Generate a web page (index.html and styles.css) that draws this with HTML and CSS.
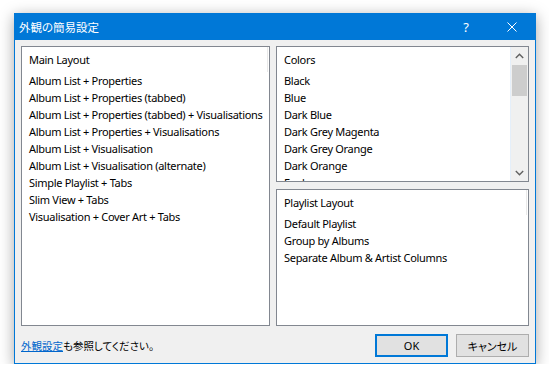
FILE: index.html
```html
<!DOCTYPE html>
<html lang="ja">
<head>
  <meta charset="UTF-8">
  <meta name="viewport" content="width=device-width, initial-scale=1.0">
  <title>外観の簡易設定</title>
  <link rel="stylesheet" href="styles.css">
</head>
<body>
  <div class="dialog">
    <div class="titlebar">
      <span class="title">外観の簡易設定</span>
      <div class="caption">
        <span class="cap-btn help">?</span>
        <span class="cap-btn close">
          <svg width="10" height="10" viewBox="0 0 10 10">
            <path d="M0.5 0.5 L9.5 9.5 M9.5 0.5 L0.5 9.5" stroke="#fff" stroke-width="1" fill="none"/>
          </svg>
        </span>
      </div>
    </div>

    <div class="content">
      <div class="panes">
        <div class="list main-list">
          <div class="list-head">Main Layout</div>
          <ul class="items">
            <li>Album List + Properties</li>
            <li>Album List + Properties (tabbed)</li>
            <li>Album List + Properties (tabbed) + Visualisations</li>
            <li>Album List + Properties + Visualisations</li>
            <li>Album List + Visualisation</li>
            <li>Album List + Visualisation (alternate)</li>
            <li>Simple Playlist + Tabs</li>
            <li>Slim View + Tabs</li>
            <li>Visualisation + Cover Art + Tabs</li>
          </ul>
        </div>

        <div class="side">
          <div class="list colors-list">
            <div class="list-body">
              <div class="list-head">Colors</div>
              <ul class="items">
                <li>Black</li>
                <li>Blue</li>
                <li>Dark Blue</li>
                <li>Dark Grey Magenta</li>
                <li>Dark Grey Orange</li>
                <li>Dark Orange</li>
                <li>Foobar</li>
              </ul>
            </div>
            <div class="scrollbar">
              <span class="arrow">
                <svg width="9" height="6" viewBox="0 0 9 6"><path d="M0.8 5 L4.5 1.3 L8.2 5" stroke="#606060" stroke-width="1.4" fill="none"/></svg>
              </span>
              <div class="track"><div class="thumb"></div></div>
              <span class="arrow">
                <svg width="9" height="6" viewBox="0 0 9 6"><path d="M0.8 1 L4.5 4.7 L8.2 1" stroke="#606060" stroke-width="1.4" fill="none"/></svg>
              </span>
            </div>
          </div>

          <div class="list playlist-list">
            <div class="list-head">Playlist Layout</div>
            <ul class="items">
              <li>Default Playlist</li>
              <li>Group by Albums</li>
              <li>Separate Album &amp; Artist Columns</li>
            </ul>
          </div>
        </div>
      </div>

      <div class="footer">
        <p class="note"><a href="#">外観設定</a>も参照してください。</p>
        <div class="buttons">
          <button class="btn default">OK</button>
          <button class="btn">キャンセル</button>
        </div>
      </div>
    </div>
  </div>
</body>
</html>
```

FILE: styles.css
```css
body {
  margin: 0;
  padding: 13px 0 0 14px;
  background: #fff;
  font-family: "Noto Sans", "Noto Sans CJK JP", sans-serif;
  font-size: 11px;
  letter-spacing: -0.3px;
  color: #000;
}
.dialog {
  box-sizing: border-box;
  width: 522px;
  height: 351px;
  border: 1px solid #0078d7;
  background: #f0f0f0;
  box-shadow: 0 3px 14px rgba(0, 0, 0, 0.35);
}
.titlebar {
  display: flex;
  align-items: center;
  height: 26px;
  background: #0078d7;
  color: #fff;
}
.title {
  flex: 1;
  padding-left: 4px;
  font-family: "Noto Sans CJK JP", sans-serif;
  font-feature-settings: "palt";
  font-size: 11.5px;
  letter-spacing: 0;
}
.caption {
  display: flex;
  height: 100%;
}
.cap-btn {
  display: flex;
  align-items: center;
  justify-content: center;
  width: 46px;
  height: 100%;
}
.help {
  font-size: 13px;
}
.content {
  padding: 6px 6px 0;
}
.panes {
  display: flex;
  gap: 6px;
  height: 280px;
}
.list {
  box-sizing: border-box;
  position: relative;
  border: 1px solid #828790;
  background: #fff;
  overflow: hidden;
}
.list::after {
  content: "";
  position: absolute;
  top: 0;
  right: 1px;
  width: 1px;
  height: 25px;
  background: #e9e9e9;
}
.main-list {
  width: 249px;
}
.side {
  flex: 1;
  display: flex;
  flex-direction: column;
  gap: 7px;
}
.colors-list {
  display: flex;
  height: 136px;
}
.colors-list::after {
  display: none;
}
.playlist-list {
  flex: 1;
}
.list-body {
  flex: 1;
  overflow: hidden;
  border-right: 1px solid #e5effa;
}
.list-head {
  padding: 4px 7px 0;
  margin-bottom: 4px;
  line-height: 17px;
}
.items {
  list-style: none;
  margin: 0;
  padding: 0 7px;
}
.items li {
  line-height: 17px;
  white-space: nowrap;
}
.scrollbar {
  display: flex;
  flex-direction: column;
  width: 17px;
  background: #f0f0f0;
}
.arrow {
  display: flex;
  align-items: center;
  justify-content: center;
  height: 17px;
}
.track {
  flex: 1;
  padding: 0 1px;
}
.thumb {
  height: 31px;
  margin-top: 1px;
  background: #cdcdcd;
}
.footer {
  display: flex;
  align-items: center;
  justify-content: space-between;
  padding-top: 8px;
}
.note {
  margin: 0;
  font-family: "Noto Sans CJK JP", sans-serif;
  font-feature-settings: "palt";
  font-size: 10.5px;
  letter-spacing: 0;
  color: #000;
}
.note a {
  color: #0066cc;
}
.buttons {
  display: flex;
  gap: 8px;
}
.btn {
  box-sizing: border-box;
  width: 73px;
  height: 23px;
  padding: 0;
  border: 1px solid #adadad;
  background: #e1e1e1;
  font-family: "Noto Sans", "Noto Sans CJK JP", sans-serif;
  font-feature-settings: "palt";
  font-size: 11px;
  letter-spacing: 0;
  color: #000;
}
.btn.default {
  border: 2px solid #0078d7;
}
```
